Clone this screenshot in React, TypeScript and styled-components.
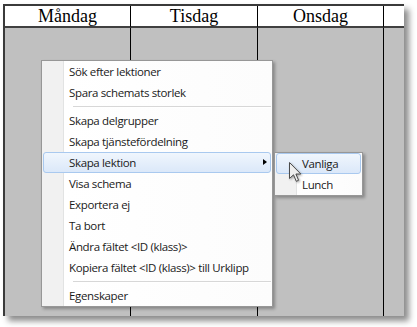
import styled, { createGlobalStyle } from 'styled-components';

const GlobalStyle = createGlobalStyle`
	html, body {
		margin: 0;
		background: #ffffff;
	}
`;

const Frame = styled.div`
	position: relative;
	width: 417px;
	height: 327px;
	padding: 4px 0 0 3px;
	box-sizing: border-box;
	overflow: hidden;
`;

const Window = styled.div`
	width: 401px;
	height: 312px;
	box-sizing: border-box;
	border-top: 2px solid #3a3a3a;
	border-left: 2px solid #3a3a3a;
	background: #c0c0c0;
	box-shadow: 5px 5px 6px rgba(0, 0, 0, 0.45);
	display: grid;
	grid-template-columns: 126px 127px 126px 1fr;
	grid-template-rows: 22px 1fr;
`;

const DayHeader = styled.div<{ $last?: boolean }>`
	background: #ffffff;
	border-bottom: 2px solid #404040;
	border-right: ${p => (p.$last ? 'none' : '1px solid #000')};
	font-family: 'Liberation Serif', 'Times New Roman', serif;
	font-size: 18px;
	line-height: 20px;
	text-align: center;
	color: #000;
`;

const DayColumn = styled.div<{ $last?: boolean }>`
	border-right: ${p => (p.$last ? 'none' : '1px solid #000')};
`;

const Menu = styled.div<{ $left: number; $top: number; $width: number }>`
	position: absolute;
	left: ${p => p.$left}px;
	top: ${p => p.$top}px;
	width: ${p => p.$width}px;
	box-sizing: border-box;
	padding: 0 1px;
	border: 1px solid #979797;
	background: linear-gradient(
		to right,
		#f1f1f1 0,
		#f1f1f1 21px,
		#e2e3e3 21px,
		#e2e3e3 22px,
		#ffffff 22px,
		#fcfcfc 100%
	);
	box-shadow: 2px 2px 3px rgba(0, 0, 0, 0.3);
	font-family: 'Open Sans', 'Noto Sans', sans-serif;
	font-size: 11.5px;
	letter-spacing: -0.35px;
	color: #1a1a1a;
`;

const Item = styled.div<{ $active?: boolean }>`
	position: relative;
	height: 21px;
	line-height: 20px;
	padding-left: 25px;
	box-sizing: border-box;
	white-space: nowrap;
	border: 1px solid ${p => (p.$active ? '#a9c9ef' : 'transparent')};
	border-radius: 3px;
	background: ${p => (p.$active ? 'linear-gradient(to bottom, #f0f6fd, #dbe8f9)' : 'transparent')};
`;

const Separator = styled.div`
	height: 7px;
	margin-left: 30px;
	box-sizing: border-box;
	padding-top: 3px;

	&::after {
		content: '';
		display: block;
		border-top: 1px solid #d7d7d7;
		border-bottom: 1px solid #ffffff;
	}
`;

const SubArrow = styled.span`
	position: absolute;
	right: 3px;
	top: 6px;
	width: 0;
	height: 0;
	border-top: 3.5px solid transparent;
	border-bottom: 3.5px solid transparent;
	border-left: 4px solid #000;
`;

const Cursor = styled.svg`
	position: absolute;
	left: 289px;
	top: 162px;
	filter: drop-shadow(1px 1px 1px rgba(0, 0, 0, 0.35));
`;

const days = ['Måndag', 'Tisdag', 'Onsdag', ''];

export default function App() {
	return (
		<>
			<GlobalStyle />
			<Frame>
				<Window>
					{days.map((d, i) => (
						<DayHeader key={'h' + i} $last={i === days.length - 1}>
							{d}
						</DayHeader>
					))}
					{days.map((d, i) => (
						<DayColumn key={'c' + i} $last={i === days.length - 1} />
					))}
				</Window>

				<Menu $left={41} $top={60} $width={232}>
					<Item>Sök efter lektioner</Item>
					<Item>Spara schemats storlek</Item>
					<Separator />
					<Item>Skapa delgrupper</Item>
					<Item>Skapa tjänstefördelning</Item>
					<Item $active>
						Skapa lektion
						<SubArrow />
					</Item>
					<Item>Visa schema</Item>
					<Item>Exportera ej</Item>
					<Item>Ta bort</Item>
					<Item>Ändra fältet &lt;ID (klass)&gt;</Item>
					<Item>Kopiera fältet &lt;ID (klass)&gt; till Urklipp</Item>
					<Separator />
					<Item>Egenskaper</Item>
				</Menu>

				<Menu $left={274} $top={152} $width={89}>
					<Item $active>Vanliga</Item>
					<Item>Lunch</Item>
				</Menu>

				<Cursor width="14" height="22" viewBox="0 0 14 22">
					<path
						d="M0.5 0.5 L0.5 16.5 L4.5 12.8 L7.3 19.3 L9.6 18.3 L6.9 12 L11.8 12 Z"
						fill="#eeeeee"
						stroke="#4a4a4a"
						strokeWidth="1"
						strokeLinejoin="round"
					/>
				</Cursor>
			</Frame>
		</>
	);
}
